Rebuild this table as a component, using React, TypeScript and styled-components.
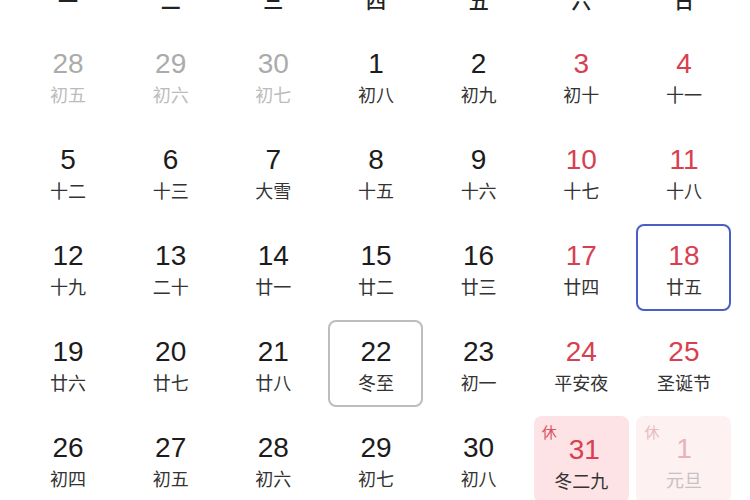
import React from "react";
import styled, { createGlobalStyle, css } from "styled-components";

const Global = createGlobalStyle`
  html, body { margin: 0; padding: 0; background: #fff; overflow: hidden; }
  body { width: 750px; height: 500px; }
`;

const Page = styled.div`
  width: 750px;
  height: 500px;
  overflow: hidden;
  background: #fff;
`;

const Grid = styled.div`
  display: grid;
  grid-template-columns: repeat(7, 95px);
  grid-template-rows: 46px repeat(5, 87px);
  column-gap: 7.67px;
  row-gap: 9px;
  padding-left: 20.5px;
  margin-top: -23px;
`;

const WeekHead = styled.div`
  display: flex;
  align-items: center;
  justify-content: center;
  font-family: "Noto Sans CJK SC", sans-serif;
  font-size: 20px;
  font-weight: 500;
  color: #222;
`;

type Variant = "normal" | "selected" | "today" | "rest" | "restFaded";

const Cell = styled.div<{ $variant: Variant }>`
  position: relative;
  box-sizing: border-box;
  display: flex;
  flex-direction: column;
  align-items: center;
  padding-top: 16px;
  border-radius: 8px;
  ${(p) =>
    p.$variant === "selected" &&
    css`
      border: 2px solid #4a5ec3;
      padding-top: 14px;
    `}
  ${(p) =>
    p.$variant === "today" &&
    css`
      border: 2px solid #bdbdbd;
      padding-top: 14px;
    `}
  ${(p) =>
    p.$variant === "rest" &&
    css`
      background: #fde3e6;
      padding-top: 18px;
    `}
  ${(p) =>
    p.$variant === "restFaded" &&
    css`
      background: #fdf1f2;
      padding-top: 17px;
    `}
`;

type Tone = "muted" | "dark" | "red" | "faded";

const numColor: Record<Tone, string> = {
  muted: "#ababab",
  dark: "#1c1c1c",
  red: "#d8404f",
  faded: "#e9b2b9",
};

const DayNum = styled.div<{ $tone: Tone; $shift?: number }>`
  font-family: "Liberation Sans", Arial, sans-serif;
  font-size: 28px;
  line-height: 32px;
  color: ${(p) => numColor[p.$tone]};
  margin-left: ${(p) => p.$shift ?? 0}px;
`;

const lunarColor: Record<Tone, string> = {
  muted: "#bcbcbc",
  dark: "#333",
  red: "#333",
  faded: "#c9c0c1",
};

const Lunar = styled.div<{ $tone: Tone }>`
  font-family: "Noto Sans CJK SC", sans-serif;
  font-size: 18px;
  line-height: 26px;
  margin-top: 1px;
  color: ${(p) => lunarColor[p.$tone]};
`;

const RestBadge = styled.span<{ $faded?: boolean }>`
  position: absolute;
  left: 8px;
  top: 7px;
  font-family: "Noto Sans CJK SC", sans-serif;
  font-size: 15px;
  line-height: 18px;
  color: ${(p) => (p.$faded ? "#ebbac0" : "#d9505e")};
`;

type Day = {
  n: number;
  l: string;
  tone: Tone;
  variant?: Variant;
  badge?: "rest" | "restFaded";
  shift?: number;
};

const week = ["一", "二", "三", "四", "五", "六", "日"];

const d = (
  n: number,
  l: string,
  tone: Tone,
  extra: Partial<Day> = {}
): Day => ({ n, l, tone, ...extra });

const days: Day[] = [
  d(28, "初五", "muted"),
  d(29, "初六", "muted"),
  d(30, "初七", "muted"),
  d(1, "初八", "dark"),
  d(2, "初九", "dark"),
  d(3, "初十", "red"),
  d(4, "十一", "red"),
  d(5, "十二", "dark"),
  d(6, "十三", "dark"),
  d(7, "大雪", "dark"),
  d(8, "十五", "dark"),
  d(9, "十六", "dark"),
  d(10, "十七", "red"),
  d(11, "十八", "red"),
  d(12, "十九", "dark"),
  d(13, "二十", "dark"),
  d(14, "廿一", "dark"),
  d(15, "廿二", "dark"),
  d(16, "廿三", "dark"),
  d(17, "廿四", "red"),
  d(18, "廿五", "red", { variant: "selected" }),
  d(19, "廿六", "dark"),
  d(20, "廿七", "dark"),
  d(21, "廿八", "dark"),
  d(22, "冬至", "dark", { variant: "today" }),
  d(23, "初一", "dark"),
  d(24, "平安夜", "red"),
  d(25, "圣诞节", "red"),
  d(26, "初四", "dark"),
  d(27, "初五", "dark"),
  d(28, "初六", "dark"),
  d(29, "初七", "dark"),
  d(30, "初八", "dark"),
  d(31, "冬二九", "red", { variant: "rest", badge: "rest", shift: 6 }),
  d(1, "元旦", "faded", { variant: "restFaded", badge: "restFaded" }),
];

export default function App() {
  return (
    <Page>
      <Global />
      <Grid>
        {week.map((w) => (
          <WeekHead key={w}>{w}</WeekHead>
        ))}
        {days.map((day, i) => (
          <Cell key={i} $variant={day.variant ?? "normal"}>
            {day.badge && (
              <RestBadge $faded={day.badge === "restFaded"}>休</RestBadge>
            )}
            <DayNum $tone={day.tone} $shift={day.shift}>
              {day.n}
            </DayNum>
            <Lunar $tone={day.tone}>{day.l}</Lunar>
          </Cell>
        ))}
      </Grid>
    </Page>
  );
}
